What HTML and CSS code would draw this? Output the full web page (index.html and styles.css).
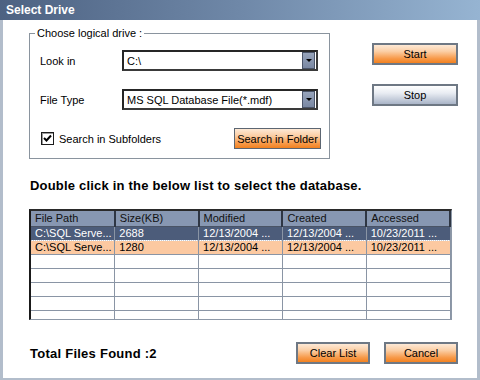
FILE: index.html
```html
<!DOCTYPE html>
<html lang="en">
<head>
    <meta charset="UTF-8">
    <title>Select Drive</title>
    <link rel="stylesheet" href="styles.css">
</head>
<body>
    <div class="window">
        <div class="titlebar">Select Drive</div>

        <div class="frame">
            <!-- Drive options + start/stop -->
            <div class="top">
                <fieldset class="group">
                    <legend>Choose logical drive :</legend>
                    <div class="field-row">
                        <label for="lookIn">Look in</label>
                        <div class="combo" id="lookIn">
                            <span class="combo-value">C:\</span>
                            <span class="combo-btn"><span class="arrow"></span></span>
                        </div>
                    </div>
                    <div class="field-row second">
                        <label for="fileType">File Type</label>
                        <div class="combo" id="fileType">
                            <span class="combo-value">MS SQL Database File(*.mdf)</span>
                            <span class="combo-btn"><span class="arrow"></span></span>
                        </div>
                    </div>
                    <div class="check-row">
                        <label class="check">
                            <span class="checkbox">
                                <svg width="9" height="9" viewBox="0 0 9 9"><path d="M1 4 L3.5 6.5 L8 1.5" fill="none" stroke="#000" stroke-width="2"/></svg>
                            </span>
                            Search in Subfolders
                        </label>
                        <button class="btn btn-orange btn-search">Search in Folder</button>
                    </div>
                </fieldset>

                <div class="side">
                    <button class="btn btn-orange">Start</button>
                    <button class="btn btn-grey">Stop</button>
                </div>
            </div>

            <h2 class="hint">Double click in the below list to select the database.</h2>

            <!-- File list -->
            <div class="grid">
                <table>
                    <thead>
                        <tr>
                            <th>File Path</th>
                            <th>Size(KB)</th>
                            <th>Modified</th>
                            <th>Created</th>
                            <th>Accessed</th>
                        </tr>
                    </thead>
                    <tbody>
                        <tr class="selected">
                            <td>C:\SQL Serve...</td>
                            <td>2688</td>
                            <td>12/13/2004 ...</td>
                            <td>12/13/2004 ...</td>
                            <td>10/23/2011 ...</td>
                        </tr>
                        <tr class="alt">
                            <td>C:\SQL Serve...</td>
                            <td>1280</td>
                            <td>12/13/2004 ...</td>
                            <td>12/13/2004 ...</td>
                            <td>10/23/2011 ...</td>
                        </tr>
                        <tr><td></td><td></td><td></td><td></td><td></td></tr>
                        <tr><td></td><td></td><td></td><td></td><td></td></tr>
                        <tr><td></td><td></td><td></td><td></td><td></td></tr>
                        <tr><td></td><td></td><td></td><td></td><td></td></tr>
                        <tr><td></td><td></td><td></td><td></td><td></td></tr>
                    </tbody>
                </table>
            </div>

            <div class="footer">
                <div class="total">Total Files Found :2</div>
                <div class="actions">
                    <button class="btn btn-orange">Clear List</button>
                    <button class="btn btn-orange">Cancel</button>
                </div>
            </div>
        </div>
    </div>
</body>
</html>
```

FILE: styles.css
```css
body {
    margin: 0;
    font-family: "Liberation Sans", Arial, sans-serif;
    font-size: 11px;
    color: #000;
    background: #fff;
}
.window {
    width: 480px;
    height: 380px;
    display: flex;
    flex-direction: column;
    background: #fff;
}
.titlebar {
    height: 20px;
    line-height: 20px;
    padding-left: 6px;
    background: linear-gradient(90deg, #4d6282, #6f88a8 50%, #96b4d2);
    color: #fff;
    font-weight: bold;
    font-size: 12px;
}
.frame {
    flex: 1;
    border: solid #b2bdcb;
    border-width: 0 3px 2px 3px;
    padding: 7px 19px 0 26px;
    display: flex;
    flex-direction: column;
}
.top {
    display: flex;
    align-items: flex-start;
}
.group {
    width: 301px;
    box-sizing: border-box;
    margin: 0;
    padding: 0 8px 9px 10px;
    border: 1px solid #8a949e;
}
.group legend {
    margin-left: -5px;
    padding: 0 2px;
    line-height: 13px;
    font-size: 11px;
}
.field-row {
    display: flex;
    align-items: center;
    height: 21px;
    margin-top: 10px;
}
.field-row.second {
    margin-top: 18px;
}
.field-row label {
    width: 82px;
}
.combo {
    width: 196px;
    height: 21px;
    box-sizing: border-box;
    border: 2px solid #262626;
    border-right-color: #3a3a3a;
    border-bottom-color: #3a3a3a;
    display: flex;
    align-items: center;
    background: #fff;
}
.combo-value {
    flex: 1;
    padding-left: 3px;
    white-space: nowrap;
    overflow: hidden;
}
.combo-btn {
    width: 11px;
    height: 15px;
    margin-right: 1px;
    border: 1px solid #4a5468;
    background: linear-gradient(#97a4bb, #7a88a3);
    display: flex;
    align-items: center;
    justify-content: center;
}
.arrow {
    width: 0;
    height: 0;
    border-left: 3px solid transparent;
    border-right: 3px solid transparent;
    border-top: 3px solid #000;
}
.check-row {
    display: flex;
    align-items: center;
    justify-content: space-between;
    margin-top: 18px;
    padding-left: 1px;
}
.check {
    display: flex;
    align-items: center;
    gap: 5px;
}
.checkbox {
    width: 11px;
    height: 11px;
    border: 1px solid #1c1c1c;
    box-shadow: inset 1px 1px 0 #9a9a9a;
    background: #fff;
    display: flex;
    align-items: center;
    justify-content: center;
}
.btn {
    font-family: "Liberation Sans", Arial, sans-serif;
    font-size: 11px;
    color: #000;
    height: 22px;
    padding: 0;
    border: 2px solid #6e7884;
    cursor: pointer;
}
.btn-orange {
    background: linear-gradient(#fde9d6, #fbcfa6 35%, #f79a4a 75%, #f2811f);
}
.btn-grey {
    background: linear-gradient(#ffffff, #e8ecf2 40%, #aab5c8);
}
.btn-search {
    width: 87px;
    height: 21px;
    border-width: 1px;
    border-color: #5c6672;
}
.side {
    margin-left: 42px;
    padding-top: 16px;
    display: flex;
    flex-direction: column;
    gap: 19px;
}
.side .btn {
    width: 86px;
}
.hint {
    margin: 19px 0 0 1px;
    font-size: 13px;
    line-height: 16px;
    letter-spacing: 0.2px;
    font-weight: bold;
}
.grid {
    margin-top: 15px;
    width: 423px;
    height: 111px;
    box-sizing: border-box;
    overflow: hidden;
    border-top: 2px solid #2a2a2a;
    border-left: 2px solid #1a1a1a;
    border-right: 1px solid #8e99a8;
    border-bottom: 1px solid #8e99a8;
}
.grid table {
    width: 100%;
    border-collapse: collapse;
    table-layout: fixed;
}
.grid th,
.grid td {
    height: 13px;
    line-height: 13px;
    padding: 0 4px;
    text-align: left;
    font-weight: normal;
    white-space: nowrap;
    overflow: hidden;
}
.grid th {
    height: 15px;
    background: #8797b2;
    color: #111;
    border-right: 2px solid #2e3644;
    border-bottom: 1px solid #4a5466;
}
.grid td {
    border-right: 1px solid #8a95a5;
    border-bottom: 1px solid #8a95a5;
}
.grid tr.selected td {
    background: #4c5c7a;
    color: #fff;
    border-bottom: 1px dotted #c8cfdb;
}
.grid tr.alt td {
    background: #fcc9a1;
}
.footer {
    margin-top: 22px;
    display: flex;
    align-items: center;
    justify-content: space-between;
}
.total {
    padding-left: 1px;
    font-size: 13px;
    letter-spacing: 0.25px;
    font-weight: bold;
}
.actions {
    display: flex;
    gap: 14px;
}
.actions .btn {
    width: 74px;
}
```
